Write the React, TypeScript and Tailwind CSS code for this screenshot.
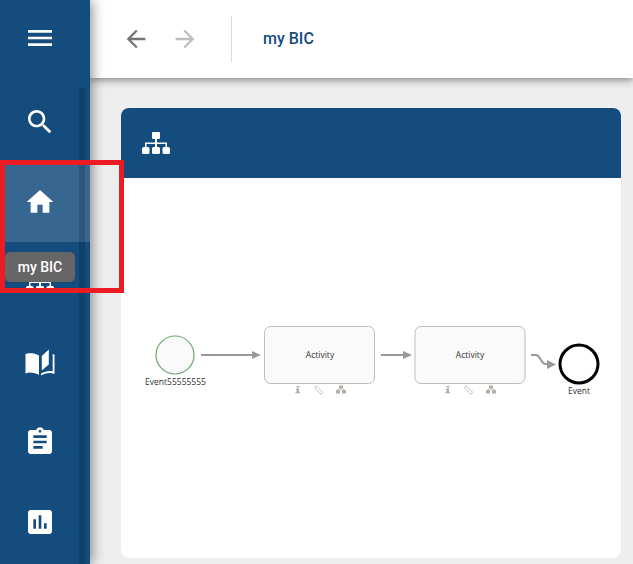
import React from 'react';

const NAVY = '#154c7e';

const Icon: React.FC<{ d: string; size?: number; className?: string }> = ({ d, size = 32, className }) => (
  <svg width={size} height={size} viewBox="0 0 24 24" fill="currentColor" className={className}>
    <path d={d} />
  </svg>
);

const OrgIcon: React.FC = () => (
  <svg width="28" height="23" viewBox="0 0 28 23" fill="white">
    <rect x="10" y="0" width="8" height="7" rx="1" />
    <rect x="13" y="7" width="2" height="9" />
    <path d="M3 16v-5.500h22v5.500h-1.500v-4h-19v4z" />
    <rect x="0" y="15" width="7.500" height="7" rx="1.500" />
    <rect x="10" y="15" width="8" height="7" rx="1.500" />
    <rect x="20.500" y="15" width="7.500" height="7" rx="1.500" />
  </svg>
);

const BookIcon: React.FC = () => (
  <svg width="30" height="27" viewBox="0 0 30 27" fill="white">
    <path d="M14 6.500C11.500 4.800 8 4.300 5 4.300c-1.800 0-3.500.2-4.500.7v19.500c1.500-.6 3-.9 4.500-.9 3.300 0 6.800.9 9 2.400z" />
    <path d="M16 26.500c2.200-1.500 5.700-2.400 9-2.400 1.500 0 3 .3 4.500.9V5.500c-.6-.3-1.200-.5-1.800-.6v17.300c-1-.3-2-.3-3-.3-2.700 0-6 1-8.700 2.600z" />
    <path d="M16.800 21.500V7l7-6.500v15z" />
  </svg>
);

const NavItem: React.FC<{ children: React.ReactNode; active?: boolean }> = ({ children, active }) => (
  <div className={`h-20 flex items-center justify-center pr-[10px] text-white ${active ? 'bg-white/15' : ''}`}>
    {children}
  </div>
);

const Sidebar: React.FC = () => (
  <aside className="relative z-20 w-[90px] h-full shrink-0 bg-[#154c7e] shadow-[2px_0_12px_rgba(0,0,0,0.45)] text-white">
    <div className="h-[82px] pb-[6px] flex items-center justify-center pr-[10px]">
      <Icon d="M3 18h18v-2H3v2zm0-5h18v-2H3v2zm0-7v2h18V6H3z" />
    </div>
    <NavItem>
      <Icon d="M15.500 14h-.79l-.28-.27C15.410 12.590 16 11.110 16 9.500 16 5.910 13.090 3 9.500 3S3 5.910 3 9.500 5.910 16 9.500 16c1.610 0 3.090-.59 4.230-1.570l.27.28v.79l5 4.990L20.490 19l-4.990-5zm-6 0C7.010 14 5 11.990 5 9.500S7.010 5 9.500 5 14 7.010 14 9.500 11.990 14 9.500 14z" />
    </NavItem>
    <NavItem active>
      <Icon d="M10 20v-6h4v6h5v-8h3L12 3 2 12h3v8z" />
    </NavItem>
    <NavItem>
      <OrgIcon />
    </NavItem>
    <NavItem>
      <BookIcon />
    </NavItem>
    <NavItem>
      <Icon d="M19 3h-4.180C14.400 1.840 13.300 1 12 1c-1.300 0-2.400.84-2.820 2H5c-1.100 0-2 .9-2 2v14c0 1.100.9 2 2 2h14c1.100 0 2-.9 2-2V5c0-1.100-.9-2-2-2zm-7 0c.55 0 1 .45 1 1s-.45 1-1 1-1-.45-1-1 .45-1 1-1zm2 14H7v-2h7v2zm3-4H7v-2h10v2zm0-4H7V7h10v2z" />
    </NavItem>
    <NavItem>
      <Icon d="M19 3H5c-1.100 0-2 .9-2 2v14c0 1.100.9 2 2 2h14c1.100 0 2-.9 2-2V5c0-1.100-.9-2-2-2zM9 17H7v-7h2v7zm4 0h-2V7h2v10zm4 0h-2v-4h2v4z" />
    </NavItem>
    {/* scrollbar */}
    <div className="absolute left-[79px] top-[87px] bottom-0 w-[6px] rounded-t bg-black/15" />
  </aside>
);

const TopBar: React.FC = () => (
  <header className="relative z-10 h-[78px] shrink-0 bg-white shadow-[0_2px_8px_rgba(0,0,0,0.45)] flex items-center pl-[32px]">
    <Icon d="M20 11H7.830l5.590-5.590L12 4l-8 8 8 8 1.410-1.410L7.830 13H20v-2z" size={28} className="text-[#757575]" />
    <Icon d="M4 11h12.170l-5.590-5.590L12 4l8 8-8 8-1.410-1.410L16.170 13H4v-2z" size={28} className="ml-[21px] text-[#bdbdbd]" />
    <div className="ml-[32px] w-px h-[46px] bg-[#dcdcdc]" />
    <span className="ml-[31px] text-[16px] font-medium text-[#154c7e]">my BIC</span>
  </header>
);

const TaskIcons: React.FC<{ x: number }> = ({ x }) => (
  <g fill="#b5aea8">
    <rect x={x - 1.500} y={386} width={3} height={1.500} />
    <path d={`M${x - 2} ${388.500}h3v3.500h1v1.200h-4.500v-1.200h1v-2.300h-.5z`} />
    <path d={`M${x + 19} ${386.500}l5.500 5.500a1.600 1.600 0 0 1-2.500 1.500l-5-5.500a1.300 1.300 0 0 1 2-1.500z`} fill="none" stroke="#c4bfba" strokeWidth="1" />
    <rect x={x + 41} y={385.500} width={4} height={3} />
    <rect x={x + 38} y={390} width={4} height={3.500} />
    <rect x={x + 44} y={390} width={4} height={3.500} />
    <path d={`M${x + 43} ${388}v2M${x + 40} ${390}v-1h6v1`} stroke="#b5aea8" strokeWidth=".7" fill="none" />
  </g>
);

// BPMN canvas, drawn in page coordinates
const Diagram: React.FC = () => (
  <svg viewBox="121 178 500 380" className="w-full h-full" style={{ fontFamily: '"Open Sans", sans-serif' }}>
    <circle cx="175" cy="355" r="19" fill="#fafafa" stroke="#6fa96f" strokeWidth="1.200" />
    <text x="175.500" y="385" fontSize="8.500" fill="#333" textAnchor="middle">Event55555555</text>

    <path d="M201 355h52" stroke="#999" strokeWidth="2" />
    <path d="M252 351l9 4-9 4z" fill="#999" />

    <rect x="264.500" y="326.500" width="110" height="57" rx="6" fill="#fafafa" stroke="#bdbdbd" />
    <text x="320" y="358" fontSize="8.500" fill="#333" textAnchor="middle">Activity</text>
    <TaskIcons x={298} />

    <path d="M381 355h23" stroke="#999" strokeWidth="2" />
    <path d="M403 351l9 4-9 4z" fill="#999" />

    <rect x="415" y="326.500" width="110" height="57" rx="6" fill="#fafafa" stroke="#bdbdbd" />
    <text x="470" y="358" fontSize="8.500" fill="#333" textAnchor="middle">Activity</text>
    <TaskIcons x={448} />

    <path d="M531 355h5c5 0 4 9 10 9h2" stroke="#999" strokeWidth="2" fill="none" />
    <path d="M547 360l9 4.500-9 4.500z" fill="#999" />

    <circle cx="579" cy="364" r="19" fill="#fff" stroke="#000" strokeWidth="3" />
    <text x="579" y="394" fontSize="8.500" fill="#333" textAnchor="middle">Event</text>
  </svg>
);

export default function App() {
  return (
    <div className="relative flex h-[564px] w-[633px] overflow-hidden bg-[#eeeeee] font-['Roboto',sans-serif]">
      <Sidebar />
      <main className="flex-1 flex flex-col min-w-0">
        <TopBar />
        <div className="flex-1 pt-[30px] pl-[31px] pr-[12px] pb-[6px]">
          <section className="h-full rounded-[8px] bg-white overflow-hidden flex flex-col">
            <div className="h-[70px] shrink-0 flex items-center pl-[21px] bg-[#154c7e]">
              <OrgIcon />
            </div>
            <div className="flex-1 min-h-0">
              <Diagram />
            </div>
          </section>
        </div>
      </main>

      {/* annotation frame and tooltip lie over the page */}
      <div className="absolute z-30 left-0 top-[160px] w-[124px] h-[133px] border-[5px] border-[#ed1c24]" />
      <div className="absolute z-40 left-[5px] top-[252px] w-[70px] h-[30px] rounded-[5px] bg-[#666666] flex items-center justify-center text-[14px] font-medium text-white">
        my BIC
      </div>
    </div>
  );
}
